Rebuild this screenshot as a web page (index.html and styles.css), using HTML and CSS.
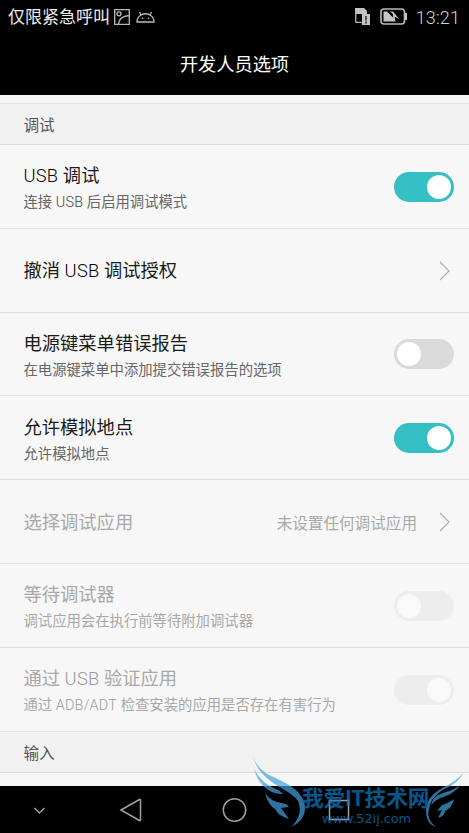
FILE: index.html
```html
<!DOCTYPE html>
<html lang="zh-CN">
<head>
<meta charset="utf-8">
<title>开发人员选项</title>
<link rel="stylesheet" href="styles.css">
</head>
<body>
<div class="phone">
  <header class="top">
    <div class="status">
      <span class="carrier">仅限紧急呼叫</span>
      <svg class="pic" width="16" height="16" viewBox="0 0 16 16"><path d="M.7.7h14.600v14.600H.7zM4.500 15C5 10 9 7 15 6.500"/><circle cx="5" cy="4.800" r="2"/></svg>
      <svg class="droid" width="19" height="12" viewBox="0 0 19 12"><path d="M1 11C1 8 2.500 5.500 5 4 8 2.300 11 2.300 14 4 16.500 5.500 18 8 18 11zM5 4 3.500 1M14 4 15.500 1"/><path d="M6.500 6.500v1.500M12.500 6.500v1.500" stroke-width="1.500"/></svg>
      <span class="spacer"></span>
      <svg class="sim" width="15" height="17" viewBox="0 0 15 17"><path class="fill" d="M0 0h9l3 3v3H0z"/><path d="M.8 2v12.300h6M11.300 3v3"/><path class="fill" d="M7 6h8v11H7z"/><path class="mark" d="M11 8v4.500M11 13.500v2"/></svg>
      <svg class="battery" width="28" height="17" viewBox="0 0 28 17"><rect x="1" y="1" width="23.500" height="15" rx="3"/><path class="fill" d="M25 5h2v7h-2zM3.500 3.500H7l6 6V6l-3-2.500h3l6.500 8-5-3 1 5H3.500z"/></svg>
      <span class="clock">13:21</span>
    </div>
    <h1>开发人员选项</h1>
  </header>
  <main>
    <h2 class="section">调试</h2>
    <div class="row"><div class="text"><b><span>USB</span> 调试</b><small>连接 <span>USB</span> 后启用调试模式</small></div><i class="switch on"></i></div>
    <div class="row"><div class="text single"><b>撤消 <span>USB</span> 调试授权</b></div><svg class="arrow" width="11" height="20" viewBox="0 0 11 20"><path d="M1 1l9 9-9 9"/></svg></div>
    <div class="row"><div class="text"><b>电源键菜单错误报告</b><small>在电源键菜单中添加提交错误报告的选项</small></div><i class="switch"></i></div>
    <div class="row"><div class="text"><b>允许模拟地点</b><small>允许模拟地点</small></div><i class="switch on"></i></div>
    <div class="row disabled"><div class="text single"><b>选择调试应用</b></div><span class="value">未设置任何调试应用</span><svg class="arrow" width="11" height="20" viewBox="0 0 11 20"><path d="M1 1l9 9-9 9"/></svg></div>
    <div class="row disabled"><div class="text"><b>等待调试器</b><small>调试应用会在执行前等待附加调试器</small></div><i class="switch"></i></div>
    <div class="row disabled"><div class="text"><b>通过 <span>USB</span> 验证应用</b><small>通过 <span>ADB/ADT</span> 检查安装的应用是否存在有害行为</small></div><i class="switch on"></i></div>
    <h2 class="section">输入</h2>
  </main>
  <nav>
    <svg width="469" height="47" viewBox="0 0 469 47"><path d="M34.500 22l5 5 5-5M121 24 139.500 13.500q1-.5 1 1v19q0 1.500-1 1zM329.500 14.500h19v19h-19z"/><circle cx="234.500" cy="24" r="11.200"/></svg>
  </nav>
  <div class="watermark">
    <svg width="229" height="83" viewBox="0 0 229 83">
      <path class="wing" d="M13 6C16 16 23 22 31 26C47 33 63 41 65 56Q66 70 51 77C59 70 62 60 58 51C50 38 20 34 13 6z"/>
      <path class="wing" d="M14 19C20 30 27 35 36 39Q41 41 43 44C37 44 32 43 27 39Q18 33 14 19z"/>
      <path class="wing" d="M25 43Q31 52 42 53Q48 54 49 57L41 58 49 69Q37 65 36 60Q28 55 25 43z"/>
      <path class="wing" d="M223 23C218 34 209 36 201 41Q190 49 189 59C187 67 190 72 196 77Q186 74 186 61C186 49 194 43 202 38Q216 32 223 23z"/>
      <path class="wing" d="M221 34C215 43 207 46 200 48Q194 51 191 55Q193 46 203 43Q215 40 221 34z"/>
      <path class="wing" d="M214 49Q207 54 202 55L197 61 202 60 198 68Q205 66 205 61Q212 58 214 49z"/>
    </svg>
    <span class="brand">我爱IT技术网</span>
    <span class="site">www.52ij.com</span>
  </div>
</div>
</body>
</html>
```
FILE: styles.css
```css
* { box-sizing: border-box; }
body { margin: 0; font-family: Roboto, "Noto Sans CJK SC", sans-serif; background: #000; }
.phone { position: relative; width: 469px; height: 833px; overflow: hidden; display: flex; flex-direction: column; background: #f7f7f7; }
svg { display: block; flex: none; fill: none; stroke: #b9b9b9; stroke-width: 1.3; }
.fill { fill: #c4c4c4; stroke: none; }
.top { height: 95px; flex: none; background: #000; color: #fff; }
.status { height: 34px; display: flex; align-items: center; padding: 0 9px 0 8px; }
.carrier { font-size: 17px; line-height: 36px; color: #eee; }
.pic { margin-left: 4px; margin-top: -1px; }
.droid { margin-left: 6px; }
.spacer { flex: 1; }
.sim { margin-right: 10px; margin-top: -1px; }
.mark { stroke: #111; }
.battery { margin-right: 8px; margin-top: -1px; }
.battery rect { stroke-width: 1.6; }
.clock { font-size: 18px; font-weight: 300; letter-spacing: .1px; color: #d4d4d4; }
h1 { margin: 0; font-size: 18.2px; font-weight: 400; line-height: 62px; text-align: center; }
main { flex: 1; min-height: 0; padding-top: 8px; }
.section { margin: 0; height: 42px; padding: 2px 0 0 23.5px; border-top: 1px solid #e2e2e2; border-bottom: 1px solid #dcdcdc; background: #f1f1f1; color: #555; font-size: 15.6px; font-weight: 400; line-height: 40px; }
.row { height: 83.8px; padding: 1px 15px 0 23.5px; display: flex; align-items: center; border-bottom: 1px solid #dfdfdf; }
.row:nth-last-child(2) { border-bottom: 0; height: 82.9px; }
.text { flex: 1; white-space: nowrap; padding-top: 4px; }
.single { padding-top: 1px; }
b { display: block; font-size: 18.3px; font-weight: 400; line-height: 28px; color: #1a1a1a; }
b span, small span { font-weight: 300; letter-spacing: .25px; color: #000; }
small { display: block; font-size: 14.35px; font-weight: 400; line-height: 25px; color: #666; }
small span { color: #444; }
.disabled b, .disabled small, .value { color: #a8a8a8; }
.disabled span { color: #999; }
.disabled .value { color: #a8a8a8; }
.value { font-size: 15.6px; margin-right: 22px; }
.arrow { margin-right: 4px; stroke: #aaa; stroke-width: 1.1; }
.switch { width: 60px; height: 30px; padding: 3px; border-radius: 15px; display: flex; background: #dadada; }
.switch::before { content: ""; width: 24px; height: 24px; border-radius: 50%; background: #fff; }
.on { background: #33bfc4; justify-content: flex-end; }
.disabled .switch { background: #ededed; }
.disabled .switch::before { background: #f9f9f9; }
nav { height: 47px; flex: none; background: #000; }
nav svg { stroke: #a0a0a0; stroke-width: 1.5; }
.watermark { position: absolute; left: 240px; top: 750px; width: 229px; height: 83px; opacity: .7; }
.watermark svg { position: absolute; left: 0; top: 0; }
.wing { fill: #42a4e4; stroke: none; }
.brand, .site { position: absolute; white-space: nowrap; color: #0c7cc6; }
.brand { left: 62px; top: 38px; font-size: 21.6px; font-weight: 700; line-height: 22px; }
.site { left: 82px; top: 62px; font-family: "DejaVu Sans", sans-serif; font-size: 12.8px; line-height: 14px; }
```
